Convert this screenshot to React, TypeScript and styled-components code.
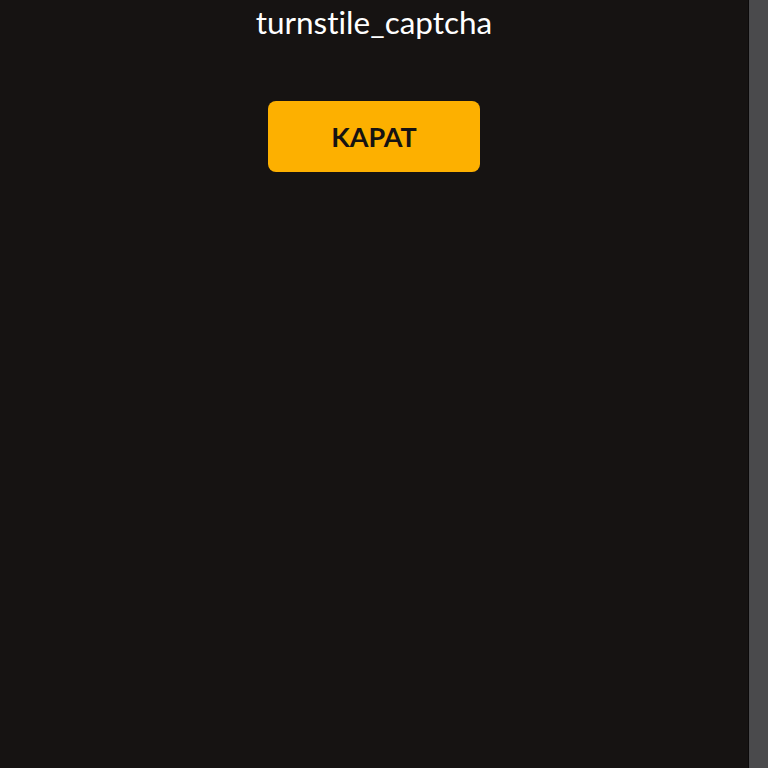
import React from 'react';
import styled, { createGlobalStyle } from 'styled-components';

const GlobalStyle = createGlobalStyle`
  html, body {
    margin: 0;
    padding: 0;
    background: #161312;
    font-family: Lato, "Noto Sans", sans-serif;
    font-variant-ligatures: none;
  }
`;

const Page = styled.div`
  display: flex;
  height: 768px;
  overflow: hidden;
`;

const Main = styled.main`
  flex: 1;
  display: flex;
  flex-direction: column;
  align-items: center;
  padding-top: 2px;
  gap: 59px;
`;

const Title = styled.h1`
  margin: 0;
  color: #ffffff;
  font-size: 31.5px;
  font-weight: 400;
  line-height: 40px;
  font-variant-ligatures: none;
`;

const Button = styled.button`
  width: 212px;
  height: 71px;
  border: none;
  border-radius: 8px;
  background: #fdb000;
  color: #161312;
  font-family: Lato, "Noto Sans", sans-serif;
  font-size: 27px;
  font-weight: 700;
  cursor: pointer;
`;

const ScrollStrip = styled.div`
  width: 19px;
  background: #4a4a4c;
  border-left: 1px solid #0c0a0a;
`;

const App = () => (
  <>
    <GlobalStyle />
    <Page>
      <Main>
        <Title>turnstile_captcha</Title>
        <Button>KAPAT</Button>
      </Main>
      <ScrollStrip />
    </Page>
  </>
);

export default App;
